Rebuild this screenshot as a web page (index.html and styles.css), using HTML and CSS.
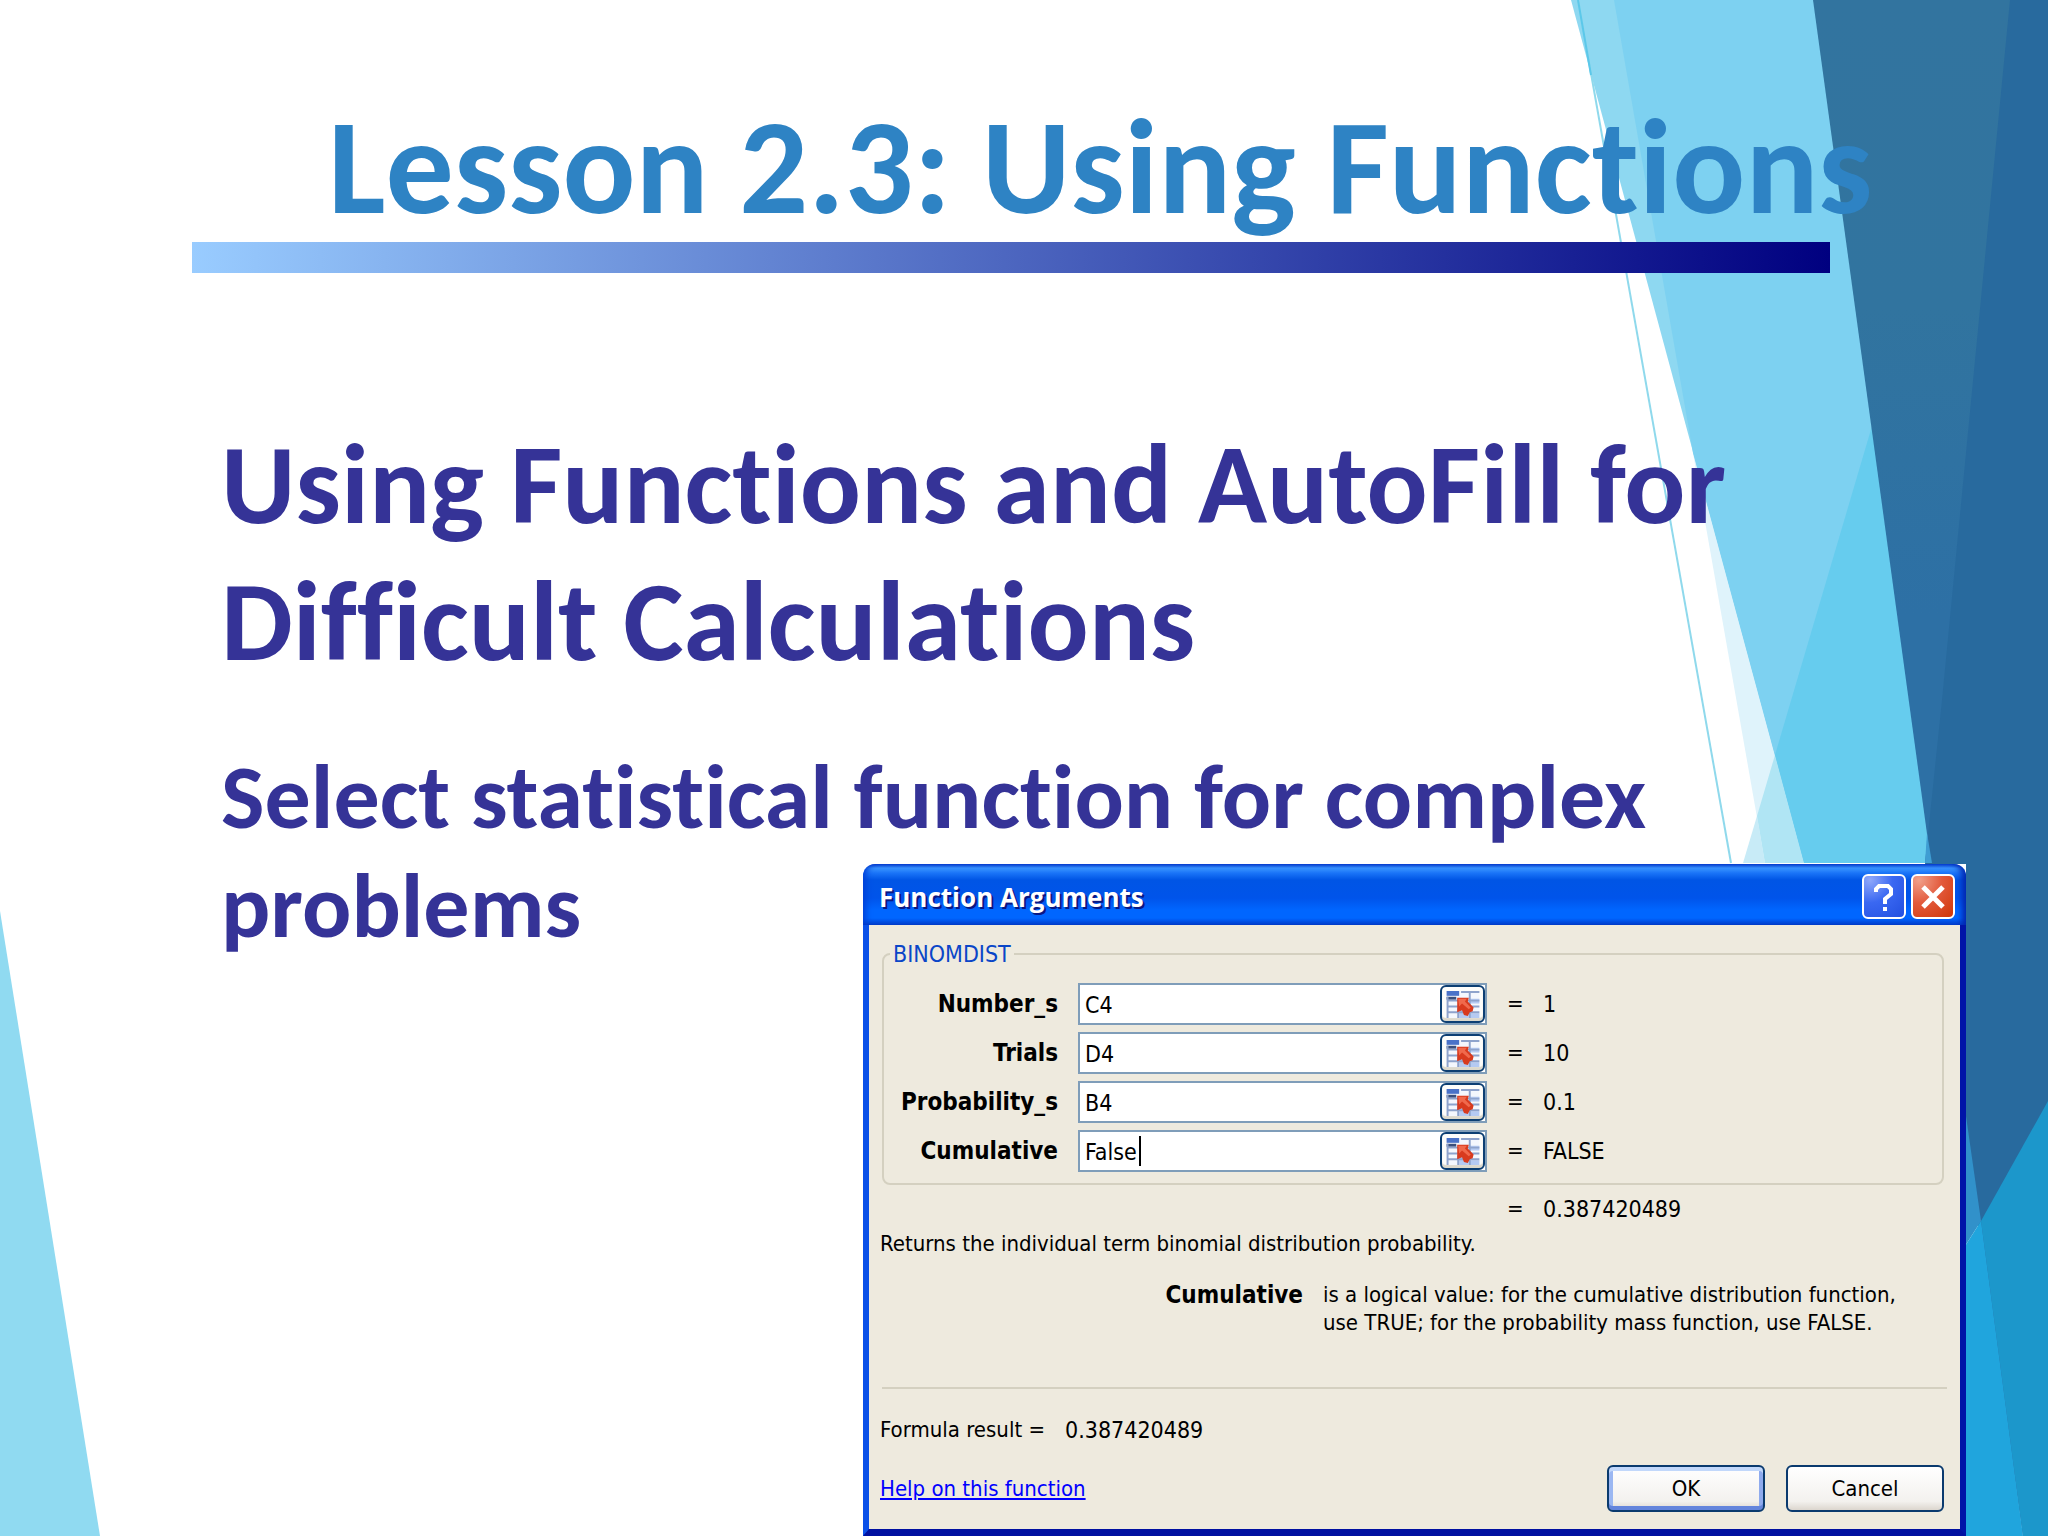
FILE: index.html
```html
<!DOCTYPE html>
<html lang="en">
<head>
  <meta charset="utf-8">
  <meta name="viewport" content="width=device-width, initial-scale=1">
  <title>Lesson 2.3: Using Functions</title>
  <link rel="stylesheet" href="styles.css">
</head>
<body>
  <svg class="backdrop" viewBox="0 0 2048 1536" preserveAspectRatio="none" aria-hidden="true">
    <defs>
      <linearGradient id="deep" x1="0" y1="0" x2="0" y2="1">
        <stop offset="0" stop-color="#32749f"/>
        <stop offset="0.2" stop-color="#31749f"/>
        <stop offset="0.4" stop-color="#2d70a5"/>
      </linearGradient>
    </defs>
    <polygon fill="#90daf1" points="0,911 100,1536 0,1536"/>
    <polygon fill="#8ed8f1" points="1571,0 1830,0 1940,863 1804,863"/>
    <polygon fill="#dff3fb" points="1693,453 1765,863 1804,863"/>
    <polygon fill="#7dd1f1" points="1614,0 1830,0 1950,863 1804,863 1693,453"/>
    <polygon fill="#c8ebf7" points="1757,816 1743,863 1765,863"/>
    <polygon fill="#b0e5f4" points="1775,755 1757,816 1765,863 1804,863"/>
    <polygon fill="#66ccee" points="1872,426 1775,755 1804,863 1950,863"/>
    <polygon fill="url(#deep)" points="1813,0 2048,0 2048,1536 2023,1536"/>
    <polygon fill="#286a9e" points="2010,0 2048,0 2048,1536 2023,1536 1925,863 1942,700"/>
    <polygon fill="#3f9dd3" points="1927,833 1925,863 1932,863"/>
    <polygon fill="#3191ca" points="1960,1074 1960,1254 1981,1221"/>
    <polygon fill="#1c97cb" points="2048,1101 1981,1221 2023,1536 2048,1536"/>
    <polygon fill="#20a5dd" points="1981,1221 1960,1254 1960,1536 2023,1536"/>
    <path stroke="#8fd9ec" stroke-width="2" fill="none" d="M1578 0 1731 863"/>
    <path stroke="#5cc8ea" stroke-width="2" fill="none" d="M1578 0 1591 75"/>
  </svg>

  <header class="lesson">
    <h1 class="lesson-title">Lesson 2.3: Using Functions</h1>
    <div class="lesson-bar"></div>
  </header>

  <main class="content">
    <h2 class="topic">Using Functions and AutoFill for Difficult Calculations</h2>
    <p class="detail"><span class="line">Select statistical function for complex</span> <span class="line">problems</span></p>
  </main>

  <svg class="sprite" aria-hidden="true">
    <symbol id="range" viewBox="0 0 34 28">
      <rect width="34" height="28" fill="#f4f7fd"/>
      <path fill="#4a72c8" d="M0 0h13v5H0z"/>
      <path fill="#b5caf2" d="M13 17h10v11H13zM24 8h10v5H24zM24 23h10v5H24z"/>
      <path fill="#3a4f7c" d="M0 6h10v3H0z"/>
      <path stroke="#8ea3cc" stroke-width="2" fill="none" d="M15 1h19M0 10h34M0 16h34M0 22h34M1 6v22M12 18v10M24 0v28"/>
      <path fill="#d83a1e" d="M11 7h12l-1 4 6 6-1 4-3 1-2 4-4-1-2-5-5 2z"/>
      <path fill="#f0694c" d="M12 8h9l-2 3 6 6-2 2-7-6-3 3z"/>
    </symbol>
  </svg>

  <section class="dialog" role="dialog" aria-labelledby="dialog-title">
    <div class="titlebar">
      <h3 class="dialog-title" id="dialog-title">Function Arguments</h3>
      <button class="caption-button help" type="button" aria-label="Help">
        <svg viewBox="0 0 24 28" width="24" height="30"><path d="M4 9V6l3-3h9l3 3v5l-6 5v5M13 24v4" fill="none" stroke="#fff" stroke-width="4"/></svg>
      </button>
      <button class="caption-button close" type="button" aria-label="Close">
        <svg viewBox="0 0 24 24" width="24" height="26"><path d="M2 2 22 22M22 2 2 22" fill="none" stroke="#fff" stroke-width="5"/></svg>
      </button>
    </div>
    <form class="dialog-body">
      <fieldset class="arguments">
        <legend class="legend">BINOMDIST</legend>
        <div class="argument">
          <label class="name" for="number-s">Number_s</label>
          <div class="field">
            <input class="entry" id="number-s" type="text" value="C4">
            <button class="range-button" type="button" aria-label="Select range"><svg class="range-icon"><use href="#range"/></svg></button>
          </div>
          <span>=</span><output class="value" for="number-s">1</output>
        </div>
        <div class="argument">
          <label class="name" for="trials">Trials</label>
          <div class="field">
            <input class="entry" id="trials" type="text" value="D4">
            <button class="range-button" type="button" aria-label="Select range"><svg class="range-icon"><use href="#range"/></svg></button>
          </div>
          <span>=</span><output class="value" for="trials">10</output>
        </div>
        <div class="argument">
          <label class="name" for="probability-s">Probability_s</label>
          <div class="field">
            <input class="entry" id="probability-s" type="text" value="B4">
            <button class="range-button" type="button" aria-label="Select range"><svg class="range-icon"><use href="#range"/></svg></button>
          </div>
          <span>=</span><output class="value" for="probability-s">0.1</output>
        </div>
        <div class="argument">
          <label class="name" for="cumulative">Cumulative</label>
          <div class="field">
            <input class="entry active" id="cumulative" type="text" value="False"><span class="caret"></span>
            <button class="range-button" type="button" aria-label="Select range"><svg class="range-icon"><use href="#range"/></svg></button>
          </div>
          <span>=</span><output class="value" for="cumulative">FALSE</output>
        </div>
      </fieldset>
      <div class="argument total"><span class="equals">=</span><output class="value">0.387420489</output></div>
      <p class="summary">Returns the individual term binomial distribution probability.</p>
      <dl class="explain">
        <dt class="name">Cumulative</dt>
        <dd class="meaning">is a logical value: for the cumulative distribution function, use TRUE; for the probability mass function, use FALSE.</dd>
      </dl>
      <hr class="rule">
      <p class="result">Formula result = <output class="value">0.387420489</output></p>
      <div class="actions">
        <a class="help-link" href="#help">Help on this function</a>
        <button class="button default" type="submit">OK</button>
        <button class="button" type="button">Cancel</button>
      </div>
    </form>
  </section>
</body>
</html>
```
FILE: styles.css
```css
* {
  box-sizing: border-box;
}

body {
  position: relative;
  min-height: 100vh;
  margin: 0;
  overflow: hidden;
  background: #fff;
  font-family: Carlito, Calibri, Lato, sans-serif;
  font-variant-ligatures: none;
}

h1, h2, h3, p, dl, dd {
  margin: 0;
}

.backdrop {
  position: absolute;
  inset: 0;
  z-index: -1;
  width: 100%;
  height: 100%;
}

.sprite {
  position: absolute;
  width: 0;
  height: 0;
}

/* Slide text */

.lesson {
  padding: 92px 0 0 192px;
}

.lesson-title {
  padding-left: 136px;
  color: #2e83c4;
  font-size: 136px;
  line-height: 150px;
  white-space: nowrap;
}

.lesson-bar {
  width: 1638px;
  max-width: 100%;
  height: 31px;
  background: linear-gradient(90deg, #99ccff, #000080);
}

.content {
  padding: 143px 280px 0 221px;
  color: #353397;
  font-weight: bold;
}

.topic {
  font-size: 114px;
  line-height: 137px;
}

.detail {
  margin-top: 52px;
  font-size: 92px;
  line-height: 109px;
}

.line {
  display: block;
  width: fit-content;
}

/* Dialog window */

.dialog {
  position: absolute;
  right: 82px;
  bottom: 0;
  left: 863px;
  background: #fff;
  color: #000;
  font-family: "DejaVu Sans Condensed", Tahoma, "DejaVu Sans", sans-serif;
  font-size: 22px;
  line-height: 28px;
}

.titlebar {
  display: flex;
  align-items: center;
  gap: 5px;
  height: 61px;
  padding: 4px 11px 0 16px;
  border-radius: 12px 12px 0 0;
  background: linear-gradient(#0a45d8 0, #3a96ff 4px, #1a74f8 9px, #0055e5 16px, #0054ea 34px, #0066ff 46px, #0066ff 54px, #0043d0 61px);
  box-shadow: inset -6px 0 6px -2px #0026b0, inset 5px 0 6px -2px #0040d8;
}

.dialog-title {
  flex: 1;
  color: #fff;
  font-family: "Open Sans", "Trebuchet MS", sans-serif;
  font-size: 26px;
  line-height: 32px;
  text-shadow: 2px 2px 0 #0a1883;
}

.caption-button {
  display: grid;
  place-items: center;
  width: 44px;
  height: 45px;
  padding: 0;
  border: 2px solid #fff;
  border-radius: 6px;
}

.caption-button.help {
  background: radial-gradient(circle at 15% 10%, #8fa8fa, #3a68f2 45%, #2350e0);
}

.caption-button.close {
  background: radial-gradient(circle at 15% 10%, #f0a08a, #e35a3c 45%, #cf3608);
}

.dialog-body {
  padding: 17px 13px 17px 11px;
  border: solid;
  border-width: 0 6px 7px;
  border-color: #0014a8 #0014a8 #0010a0 #0a50e8;
  background: #eeeade;
}

.arguments {
  min-width: 0;
  margin: 0 3px 0 2px;
  padding: 17px 0 11px;
  border: 2px solid #d4d0c0;
  border-radius: 8px;
}

.legend {
  margin-left: 6px;
  padding: 0 3px;
  color: #0a46c8;
  font-size: 23px;
  line-height: 24px;
}

.argument {
  display: grid;
  grid-template-columns: 174px 409px 16px 1fr;
  column-gap: 20px;
  align-items: center;
}

.argument + .argument {
  margin-top: 7px;
}

.name {
  font-size: 24px;
  font-weight: bold;
  text-align: right;
}

.value {
  font-size: 23px;
}

.field {
  display: flex;
  align-items: center;
  height: 42px;
  padding-left: 5px;
  border: 2px solid #7f9db9;
  background: #fff;
}

.entry {
  flex: 1;
  min-width: 0;
  padding: 2px 0 0;
  border: 0;
  outline: 0;
  background: none;
  color: #000;
  font: inherit;
  font-size: 23px;
}

.entry.active {
  flex: none;
  width: 54px;
}

.caret {
  width: 2px;
  height: 30px;
  background: #000;
}

.range-button {
  display: grid;
  place-items: center;
  width: 45px;
  height: 38px;
  margin-left: auto;
  padding: 0;
  border: 2px solid #0d3f73;
  border-radius: 6px;
  background: #fdfdfb;
  box-shadow: inset 0 -3px 1px #dcd8cb;
}

.range-icon {
  width: 34px;
  height: 27px;
}

.total {
  margin: 10px 0 0 4px;
}

.equals {
  grid-column: 3;
}

.summary {
  margin-top: 7px;
}

.explain {
  display: grid;
  grid-template-columns: 423px 600px;
  column-gap: 20px;
  margin-top: 23px;
}

.rule {
  height: 2px;
  margin: 50px 0 0 2px;
  border: 0;
  background: #d4d0c0;
}

.result {
  display: flex;
  gap: 20px;
  margin-top: 27px;
}

.actions {
  display: flex;
  align-items: center;
  gap: 21px;
  margin: 21px 3px 0 0;
}

.help-link {
  margin-right: auto;
  color: #00f;
}

.button {
  width: 158px;
  height: 47px;
  border: 2px solid #0a3a6e;
  border-radius: 6px;
  background: linear-gradient(#fff, #f3f1ee 80%, #dcd6ce);
  color: #000;
  font: inherit;
}

.button.default {
  box-shadow: inset 0 4px #c2d8fb, inset 0 -4px #6485dc, inset 4px 0 #9bb7f2, inset -4px 0 #8fabee;
}
```
